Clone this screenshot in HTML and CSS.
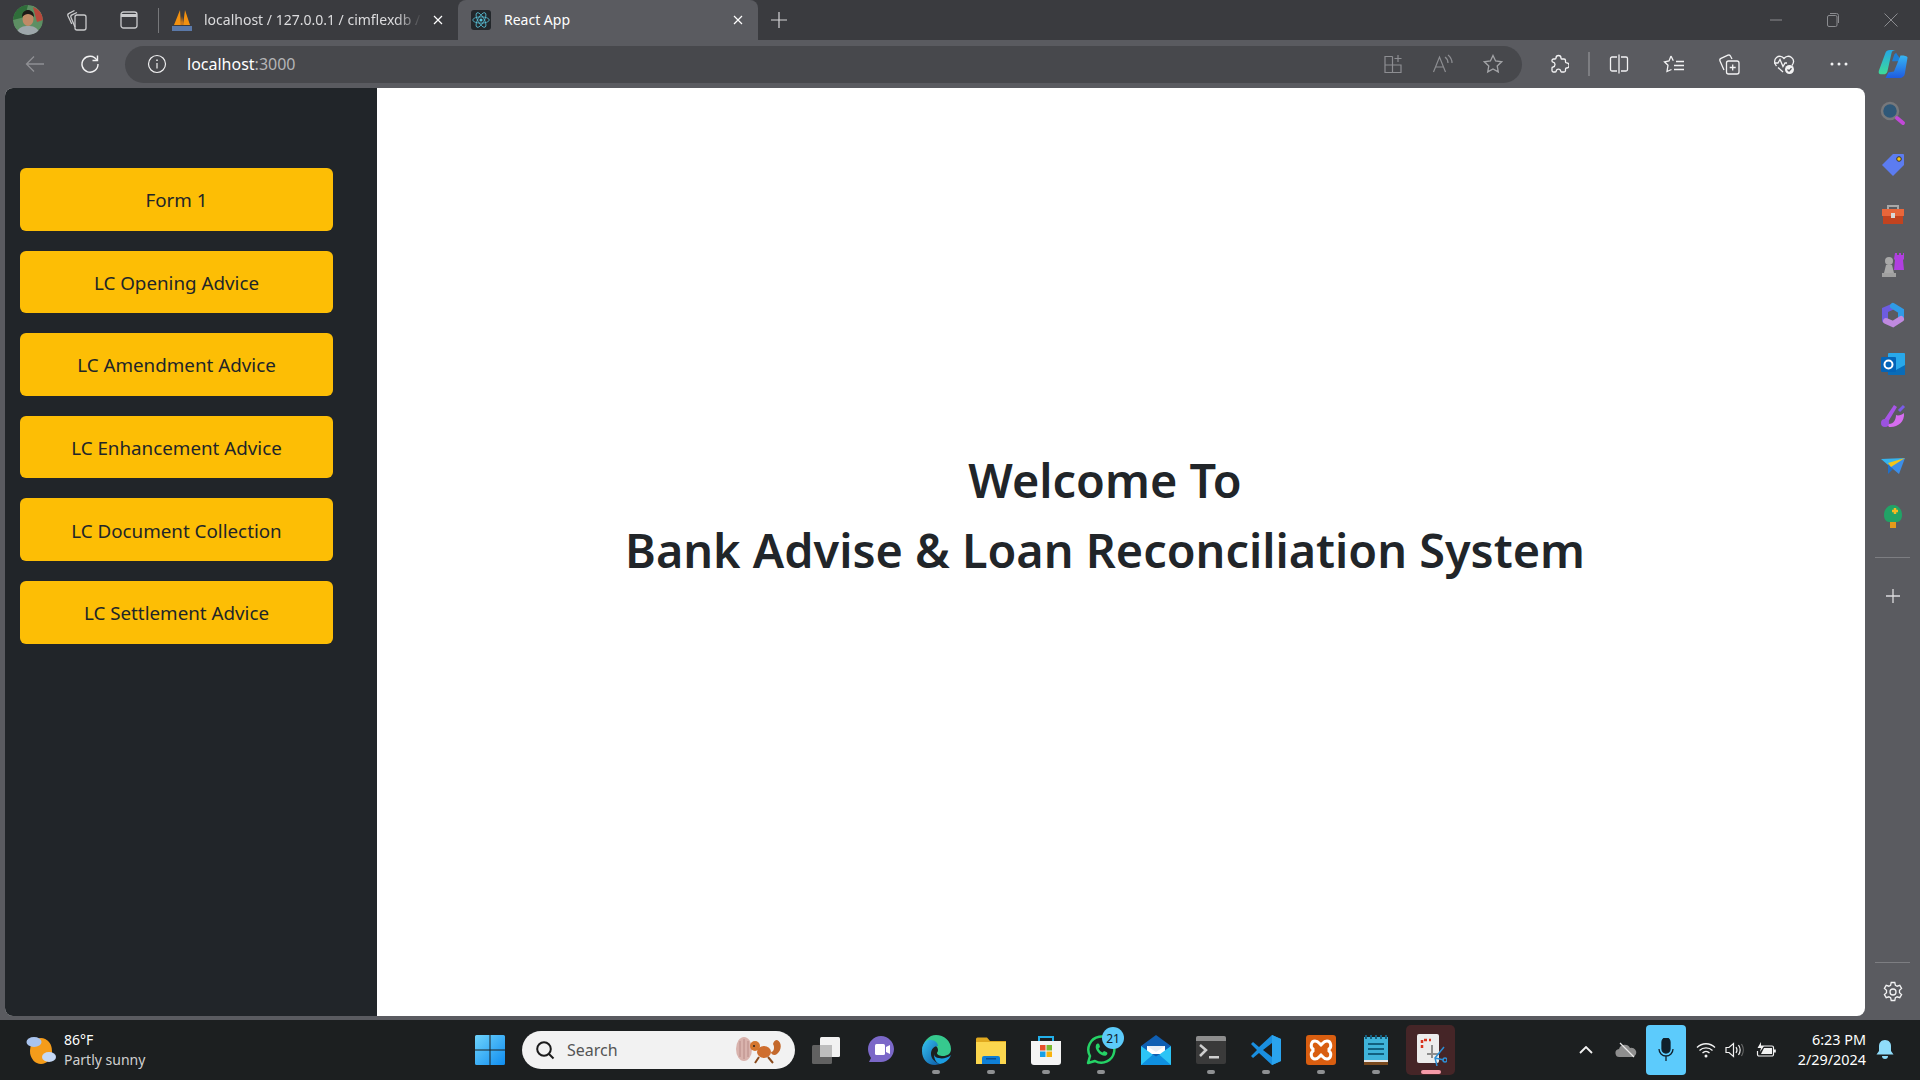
FILE: index.html
```html
<!DOCTYPE html>
<html lang="en">
<head>
    <meta charset="UTF-8">
    <meta name="viewport" content="width=device-width, initial-scale=1.0">
    <title>React App</title>
    <link rel="stylesheet" href="styles.css">
</head>
<body>
    <div class="tabbar">
        <div class="avatar">
            <svg width="30" height="30" viewBox="0 0 30 30">
                <circle cx="15" cy="15" r="15" fill="#5d8f63"/>
                <path d="M0 15A15 15 0 0 1 15 0L12 12Z" fill="#2f6d3a"/>
                <path d="M20 2a15 15 0 0 1 10 13l-6 2z" fill="#b8483c"/>
                <path d="M4 30h22v-3c-2-5-6-6-11-6s-9 1-11 6z" fill="#9ea7ab"/>
                <ellipse cx="15" cy="14" rx="5.5" ry="7" fill="#c08a66"/>
                <path d="M9 12c0-5 3-7 6-7s6 2 6 7c-2-2-4-3-6-3s-4 1-6 3z" fill="#1d1a18"/>
            </svg>
        </div>
        <svg class="tb-collections" width="22" height="22" viewBox="0 0 22 22" fill="none" stroke="#c9cacc" stroke-width="1.3">
            <rect x="9" y="6" width="11" height="15" rx="2"/>
            <path d="M9 18 5 8.5a2 2 0 0 1 1-2.6L11 3.5"/>
            <path d="M5.8 15 2 7a2 2 0 0 1 1-2.600L8.500 1.500"/>
        </svg>
        <svg class="tb-tabs" width="18" height="18" viewBox="0 0 18 18" fill="none" stroke="#c9cacc" stroke-width="1.3">
            <rect x="1" y="1" width="16" height="16" rx="2.500"/>
            <path d="M1 4.500h16" stroke-width="3"/>
        </svg>
        <span class="tb-sep"></span>
        <div class="tab">
            <svg class="favicon" width="20" height="24" viewBox="0 0 20 24">
                <path d="M2 17 8 2l1 15z" fill="#f29111"/>
                <path d="M11 17 13 2l5 15z" fill="#f29111"/>
                <path d="M8.500 17 10 8l1.500 9z" fill="#c9761a"/>
                <rect x="0" y="18" width="20" height="5" fill="#5a78a8"/>
            </svg>
            <span class="tab-title tab-fade">localhost / 127.0.0.1 / cimflexdb /</span>
            <svg class="tab-x" width="10" height="10" viewBox="0 0 10 10" stroke="#fff" stroke-width="1.200"><path d="M1 1l8 8M9 1 1 9"/></svg>
        </div>
        <div class="tab tab-active">
            <span class="react-box">
                <svg width="18" height="18" viewBox="-12 -12 24 24" fill="none" stroke="#58c4dc" stroke-width="1">
                    <circle r="2.100" fill="#58c4dc" stroke="none"/>
                    <ellipse rx="11" ry="4.200"/>
                    <ellipse rx="11" ry="4.200" transform="rotate(60)"/>
                    <ellipse rx="11" ry="4.200" transform="rotate(120)"/>
                </svg>
            </span>
            <span class="tab-title">React App</span>
            <svg class="tab-x" width="10" height="10" viewBox="0 0 10 10" stroke="#fff" stroke-width="1.200"><path d="M1 1l8 8M9 1 1 9"/></svg>
        </div>
        <svg class="tb-plus" width="16" height="16" viewBox="0 0 16 16" stroke="#d5d5d7" stroke-width="1.200"><path d="M8 0v16M0 8h16"/></svg>
        <div class="win-controls">
            <svg width="12" height="12" viewBox="0 0 12 12" stroke="#8b8c90"><path d="M0 6h12"/></svg>
            <svg width="12" height="14" viewBox="0 0 12 14" fill="none" stroke="#8b8c90"><rect x=".5" y="2.500" width="9.500" height="11" rx="1.500"/><path d="M3 .5h6.500a2 2 0 0 1 2 2V10"/></svg>
            <svg width="14" height="14" viewBox="0 0 14 14" stroke="#8b8c90"><path d="M.5.5l13 13M13.500.5l-13 13"/></svg>
        </div>
    </div>

    <div class="toolbar">
        <svg class="nav-back" width="20" height="18" viewBox="0 0 20 18" fill="none" stroke="#8f9094" stroke-width="1.300"><path d="M19 9H2M9 1.500 1.500 9 9 16.500"/></svg>
        <svg class="nav-reload" width="20" height="20" viewBox="0 0 20 20" fill="none" stroke="#f2f2f3" stroke-width="1.400"><path d="M16.800 6A8 8 0 1 0 18 10"/><path d="M17.500 1.500V6.500H12.500"/></svg>
        <div class="urlbar">
            <svg class="url-info" width="20" height="20" viewBox="0 0 20 20" fill="none" stroke="#f0f0f1" stroke-width="1.200"><circle cx="10" cy="10" r="8.500"/><path d="M10 9v5.500"/><path d="M10 5.500v1.500" stroke-width="1.500"/></svg>
            <span class="url-text">localhost<span class="url-port">:3000</span></span>
            <div class="url-icons">
                <svg width="20" height="20" viewBox="0 0 20 20" fill="none" stroke="#8d8e92" stroke-width="1.200"><path d="M9.500 2.500H2v16h16V11H2M9.500 2.500v16"/><path d="M15 1v7M11.500 4.500h7"/></svg>
                <svg width="22" height="20" viewBox="0 0 22 20" fill="none" stroke="#8d8e92" stroke-width="1.200"><path d="M1.500 18 7.500 3l6 15M3.500 13h8"/><path d="M13 3c2 1.500 3 3.500 3 6M16 1c2.500 2 4 5 4 8"/></svg>
                <svg width="20" height="20" viewBox="0 0 20 20" fill="none" stroke="#a3a4a7" stroke-width="1.300"><path d="m10 1.500 2.600 5.500 6 .8-4.400 4.100 1.100 6L10 15l-5.300 2.900 1.100-6L1.400 7.800l6-.8z"/></svg>
            </div>
        </div>
        <div class="tools">
            <span class="tool-slot"><svg width="20" height="20" viewBox="0 0 20 20" fill="none" stroke="#f2f2f3" stroke-width="1.300"><path d="M7 4a2.500 2.500 0 0 1 5 0c0 .5 0 1 .5 1H15a1.500 1.500 0 0 1 1.500 1.500V8c0 .7.5.8 1 .8a2.600 2.600 0 0 1 0 5.200c-.5 0-1 .3-1 1v1.500A1.500 1.500 0 0 1 15 18h-2.500c-.5 0-.7-.4-.8-1a2.300 2.300 0 0 0-4.500 0c0 .6-.4 1-1 1H4.500A1.500 1.500 0 0 1 3 16.500V14c0-.6.400-.9 1-1a2.500 2.500 0 0 0 0-4.900c-.6 0-1-.4-1-1V6.500A1.500 1.500 0 0 1 4.500 5H6c.6 0 1-.4 1-1z"/></svg></span>
            <span class="tool-sep"></span>
            <span class="tool-slot"><svg width="20" height="20" viewBox="0 0 20 20" fill="none" stroke="#f2f2f3" stroke-width="1.300"><path d="M8 3H3a1.500 1.500 0 0 0-1.500 1.500v11A1.500 1.500 0 0 0 3 17h5M12 3h5a1.500 1.500 0 0 1 1.500 1.500v11A1.500 1.500 0 0 1 17 17h-5M10 .5v19"/></svg></span>
            <span class="tool-slot"><svg width="22" height="20" viewBox="0 0 22 20" fill="none" stroke="#f2f2f3" stroke-width="1.300"><path d="M8 2 6 7 1.500 7.800 5 11.300 4 17.500 8.500 15.500M8 2l2.300 4.800"/><path d="M13 7.500h8M11 11.500h10M11 15.500h10"/></svg></span>
            <span class="tool-slot"><svg width="22" height="22" viewBox="0 0 22 22" fill="none" stroke="#f2f2f3" stroke-width="1.300"><rect x="8.500" y="8" width="12.500" height="13" rx="2"/><path d="M14.700 11.500v6M11.700 14.500h6"/><path d="M6 17 2 8a2 2 0 0 1 1-2.600L10 2.200a2 2 0 0 1 2.600 1L14 6"/></svg></span>
            <span class="tool-slot"><svg width="22" height="22" viewBox="0 0 22 22" fill="none" stroke="#f2f2f3" stroke-width="1.300"><path d="M3.500 13C1 10 1 6.500 3.500 4.500s5.500-1.500 7.500 1c2-2.500 5-3 7.500-1s2.500 5.200.5 8"/><path d="M1 10h4l2-3.500 3 7 2-3.500h2"/><path d="M5 14.500 10 19"/><circle cx="16.500" cy="16.500" r="4.500" fill="#f2f2f3" stroke="none"/><path d="m14.500 16.500 1.500 1.500 2.500-2.800" stroke="#55565b"/></svg></span>
            <span class="tool-slot"><svg width="18" height="4" viewBox="0 0 18 4" fill="#f2f2f3"><circle cx="2" cy="2" r="1.500"/><circle cx="9" cy="2" r="1.500"/><circle cx="16" cy="2" r="1.500"/></svg></span>
        </div>
        <svg class="copilot" width="30" height="30" viewBox="0 0 32 32">
            <defs>
                <linearGradient id="copA" x1="0" y1="0" x2="0" y2="1"><stop offset="0" stop-color="#25a7e6"/><stop offset="1" stop-color="#3ddc97"/></linearGradient>
                <linearGradient id="copB" x1="0" y1="0" x2="0" y2="1"><stop offset="0" stop-color="#36b6f2"/><stop offset="1" stop-color="#1f5be0"/></linearGradient>
            </defs>
            <path d="M8 4c1-2 2-3 5-3h6c-2 0-4 1-4.500 3L10 24c-.5 2-2 3-4 3H3c-2 0-2.800-1.600-2-4z" fill="url(#copA)"/>
            <path d="M15 13l2-6c.5-2 2-3 3-3-2 0 5 6 4 9z" fill="#1d7fd6"/>
            <path d="M24 7c1-.5 7 0 7.500 2l-3 18c-.5 2-2.500 4-5 4H8l3-6 6-1z" fill="url(#copB)"/>
        </svg>
    </div>

    <div class="window">
        <div class="viewport">
            <aside class="sidebar">
                <button class="side-btn">Form 1</button>
                <button class="side-btn">LC Opening Advice</button>
                <button class="side-btn">LC Amendment Advice</button>
                <button class="side-btn">LC Enhancement Advice</button>
                <button class="side-btn">LC Document Collection</button>
                <button class="side-btn">LC Settlement Advice</button>
            </aside>
            <main class="welcome">
                <h1>Welcome To<br>Bank Advise &amp; Loan Reconciliation System</h1>
            </main>
        </div>
        <div class="edge-rail">
            <svg class="rail-icon" width="26" height="26" viewBox="0 0 26 26"><circle cx="10" cy="10" r="8" fill="#2f5878" stroke="#77787b" stroke-width="2.500"/><path d="m17 17 6 5" stroke="#c248d8" stroke-width="4" stroke-linecap="round"/></svg>
            <svg class="rail-icon" width="26" height="26" viewBox="0 0 26 26"><path d="M13 3h10a1 1 0 0 1 1 1v10L13 25 2 14z" fill="#5c7cf0"/><circle cx="19" cy="8" r="2.300" fill="#f5c518" stroke="#333"/></svg>
            <svg class="rail-icon" width="26" height="26" viewBox="0 0 26 26"><path d="M8 8V4h10v4" fill="none" stroke="#a8a8a8" stroke-width="2"/><rect x="2" y="7" width="22" height="7" fill="#e8663a"/><rect x="3" y="14" width="20" height="8" fill="#c2431f"/><rect x="11" y="11" width="4" height="5" fill="#d8d8d8"/></svg>
            <svg class="rail-icon" width="26" height="26" viewBox="0 0 26 26"><path d="M15 1h2v2h2V1h2v2h2V1h1v6l-1 1 1 10h-10l1-10-1-1z" fill="#b03fe0"/><circle cx="9" cy="9" r="4" fill="#a8a8a8"/><path d="M6 13h6l2 8H4z" fill="#a8a8a8"/><rect x="2" y="21" width="14" height="4" fill="#a0a0a0"/></svg>
            <svg class="rail-icon" width="26" height="26" viewBox="0 0 26 26" fill="none" stroke-width="6" stroke-linecap="round"><path d="M5 18V8l7-3" stroke="#6d5ce0"/><path d="M13 4l8 5v6" stroke="#2f9be6"/><path d="M21 17l-8 5-7-3" stroke="#c08ae0"/></svg>
            <svg class="rail-icon" width="26" height="26" viewBox="0 0 26 26"><rect x="8" y="1" width="17" height="22" rx="1" fill="#28a8ea"/><path d="M8 13l8 5 9-5v10H8z" fill="#0a6cb8"/><rect x="1" y="5" width="15" height="15" rx="1" fill="#0364b8"/><circle cx="8.500" cy="12.500" r="4" fill="none" stroke="#fff" stroke-width="2"/></svg>
            <svg class="rail-icon" width="26" height="26" viewBox="0 0 26 26"><path d="M4 17 14 2l3 2-9 15z" fill="#a855e8"/><path d="M24 10c1 9-7 15-15 14l-2-3c7 1 9-5 9-9 2 1 6 0 8-2z" fill="#d66df0"/><circle cx="5" cy="20" r="4" fill="#9b52e0"/><path d="m19 8 5-5" stroke="#7a5ce8" stroke-width="3"/></svg>
            <svg class="rail-icon" width="26" height="26" viewBox="0 0 26 26"><path d="M1 6l24-1L8 12z" fill="#35b4ee"/><path d="M8 12 25 5 19 21l-6-5z" fill="#3c8ee8"/><path d="M8 10 25 5 11 14z" fill="#f5c518"/><path d="M8 12l5 4-5 5z" fill="#1f6fc8"/></svg>
            <svg class="rail-icon" width="26" height="26" viewBox="0 0 26 26"><rect x="10" y="18" width="6" height="7" fill="#e59a1a"/><path d="M13 2c5 0 9 4 9 10 0 4-2 7-5 7H9c-3 0-5-3-5-7C4 6 8 2 13 2z" fill="#21a366"/><path d="M15 5v6M12 8h6" stroke="#f5b921" stroke-width="2.500"/></svg>
            <span class="rail-sep"></span>
            <svg class="rail-plus" width="16" height="16" viewBox="0 0 16 16" stroke="#dcdcde" stroke-width="1.300"><path d="M8 1v14M1 8h14"/></svg>
            <span class="rail-sep rail-sep-bottom"></span>
            <svg class="rail-gear" width="22" height="22" viewBox="0 0 22 22" fill="none" stroke="#f2f2f3" stroke-width="1.300"><circle cx="11" cy="11" r="3"/><path d="M9.200 1.500h3.600l.6 2.800 1.700.9 2.700-.9 1.800 3.100-2.100 1.900v2.400l2.100 1.900-1.800 3.100-2.700-.9-1.700.9-.6 2.800H9.200l-.6-2.800-1.700-.9-2.700.9-1.800-3.100 2.100-1.900V9.300L2.400 7.400l1.800-3.100 2.700.9 1.700-.9z"/></svg>
        </div>
    </div>

    <footer class="taskbar">
        <div class="weather">
            <svg width="30" height="30" viewBox="0 0 30 30">
                <ellipse cx="15" cy="16" rx="11" ry="13" fill="#f59c1a"/>
                <ellipse cx="8" cy="7" rx="7.500" ry="5" fill="#a9c4ee"/>
                <ellipse cx="23" cy="22" rx="7" ry="5" fill="#c5d8f5"/>
            </svg>
            <div class="weather-text">
                <span class="temp">86°F</span>
                <span class="cond">Partly sunny</span>
            </div>
        </div>
        <svg class="winlogo" width="30" height="30" viewBox="0 0 30 30">
            <defs><linearGradient id="winG" x1="0" y1="0" x2="1" y2="1"><stop offset="0" stop-color="#6fd3fb"/><stop offset="1" stop-color="#0f8df0"/></linearGradient></defs>
            <path d="M0 1.500A1.500 1.500 0 0 1 1.500 0h13v14.500H0zM15.500 0h13A1.500 1.500 0 0 1 30 1.500v13H15.500zM0 15.500h14.500V30h-13A1.500 1.500 0 0 1 0 28.500zM15.500 15.500H30v13a1.500 1.500 0 0 1-1.500 1.500h-13z" fill="url(#winG)"/>
        </svg>
        <div class="searchbox">
            <svg width="20" height="20" viewBox="0 0 20 20" fill="none" stroke="#1b1b1b" stroke-width="2"><circle cx="9" cy="9" r="6.800"/><path d="m14 14 4.500 4.500"/></svg>
            <span class="search-text">Search</span>
            <svg class="search-art" width="48" height="30" viewBox="0 0 48 30">
                <ellipse cx="9" cy="14" rx="8" ry="12" fill="#d9b3ad"/>
                <path d="M5 6v16M9 4v20M13 6v16" stroke="#b98c88"/>
                <path d="M42 5c5 2 5 10 0 14-2 2-6 1-6-2 3 0 4-5 2-8 1-3 2-4 4-4z" fill="#c4692c"/>
                <ellipse cx="29" cy="17" rx="7" ry="6" fill="#cf6e2e"/>
                <circle cx="20" cy="11" r="5" fill="#d4762f"/>
                <circle cx="19" cy="11" r="1" fill="#222"/>
                <path d="M24 22 20 28M33 22l5 6" stroke="#8a4a1c" stroke-width="2"/>
            </svg>
        </div>
        <div class="task-apps">
            <span class="app">
                <svg width="30" height="30" viewBox="0 0 30 30"><rect x="9" y="2" width="20" height="20" rx="1.500" fill="#f2f2f2"/><rect x="1" y="10" width="20" height="19" rx="1.500" fill="#6d6d6d" fill-opacity=".85"/><rect x="9" y="10" width="12" height="12" fill="#bdbdbd"/></svg>
            </span>
            <span class="app">
                <svg width="30" height="30" viewBox="0 0 30 30"><path d="M15 1c7 0 13 6 13 13s-6 13-13 13H3l2-4C3 20 2 17 2 14 2 7 8 1 15 1z" fill="#7b68c8"/><rect x="9" y="9" width="10" height="11" rx="1.500" fill="#fff"/><path d="m20 12 4-2v9l-4-2z" fill="#fff"/></svg>
            </span>
            <span class="app app-open">
                <svg width="30" height="30" viewBox="0 0 30 30"><defs><linearGradient id="edgeG" x1="0" y1="0" x2="1" y2="1"><stop offset="0" stop-color="#35c1f1"/><stop offset="1" stop-color="#0c59a4"/></linearGradient></defs><path d="M15 0c8 0 15 6 15 14 0 5-4 7-8 7-3 0-6-1-6-3 0-1 1-1 1-3 0-3-3-6-7-6-5 0-9 4-9 7C2 6 8 0 15 0z" fill="#36c98e"/><path d="M1 16C1 8 6 4 10 5c4 0 7 3 7 6-4 0-7 3-7 8 0 4 3 8 9 10-1 0-3 1-5 1C6 30 1 24 1 16z" fill="url(#edgeG)"/><path d="M19 29c5-1 9-4 11-9-3 3-9 4-12 3-3 0-5-2-5-4 0 5 2 9 6 10z" fill="#1b9de2"/></svg>
            </span>
            <span class="app app-open">
                <svg width="30" height="30" viewBox="0 0 30 30"><path d="M0 4a1.500 1.500 0 0 1 1.500-1.500H11L14 6h16v23H0z" fill="#e0a91f"/><rect x="0" y="7" width="30" height="22" fill="#fbd64e"/><path d="M6 29v-6a2 2 0 0 1 2-2h14a2 2 0 0 1 2 2v6z" fill="#0f7fd6"/><rect x="10" y="23" width="10" height="1.500" fill="#0b4f94"/></svg>
            </span>
            <span class="app app-open">
                <svg width="30" height="30" viewBox="0 0 30 30"><path d="M8 6V2h14v4" fill="none" stroke="#22b0ea" stroke-width="2"/><path d="M0 6h30v21a3 3 0 0 1-3 3H3a3 3 0 0 1-3-3z" fill="#f4f4f4"/><rect x="9" y="10" width="5.500" height="5.500" fill="#e8502a"/><rect x="15.500" y="10" width="5.500" height="5.500" fill="#79b92f"/><rect x="9" y="16.500" width="5.500" height="5.500" fill="#18a0e8"/><rect x="15.500" y="16.500" width="5.500" height="5.500" fill="#f8b30f"/></svg>
            </span>
            <span class="app app-open">
                <svg width="30" height="30" viewBox="0 0 30 30" fill="none"><path d="M2 28l2-7a13 13 0 1 1 5 5z" stroke="#25d366" stroke-width="2.500" stroke-linejoin="round"/><path d="M10 10c1-2 3-2 3.500 0l.5 2-1.500 1.500c1 2 2 3 4 4L18 16l2.500 1c1.500.8 1 2.500-.5 3.500-4 1.500-12-5-10-10.500z" fill="#25d366"/></svg>
                <span class="badge">21</span>
            </span>
            <span class="app">
                <svg width="30" height="30" viewBox="0 0 30 30"><path d="M15 0 30 11v19H0V11z" fill="#0f5fb3"/><path d="M6 11h18v8H6z" fill="#fff"/><path d="M0 11l15 11 15-11v19H0z" fill="#2cc4f5"/><path d="M0 30 12 19.500 15 22l3-2.500L30 30z" fill="#0f90e0"/><path d="M6 11h18l-9 6z" fill="#e8eef5"/></svg>
            </span>
            <span class="app app-open">
                <svg width="30" height="30" viewBox="0 0 30 30"><rect x="0" y="1" width="30" height="28" rx="2" fill="#3a3a3a"/><path d="M0 3a2 2 0 0 1 2-2h26a2 2 0 0 1 2 2v3H0z" fill="#8d8d8d"/><path d="m4 10 6 5-6 6" fill="none" stroke="#cfcfcf" stroke-width="2.500"/><rect x="13" y="21" width="10" height="2.500" fill="#cfcfcf"/></svg>
            </span>
            <span class="app app-open">
                <svg width="30" height="30" viewBox="0 0 30 30"><path d="M21 0 30 4v22l-9 4-13-12-6 5-2-2 6-6-6-6 2-2 6 5z" fill="#1a8fe0"/><path d="M21 8v14l-9-7z" fill="#1c1e1f"/><path d="M21 0v30l9-4V4z" fill="#2aa3ee"/></svg>
            </span>
            <span class="app app-open">
                <svg width="30" height="30" viewBox="0 0 30 30"><rect width="30" height="30" rx="3" fill="#d95e10"/><path d="M9 6c-4 0-5 6-2 8v2c-3 2-2 8 2 8 3 0 4-2 6-4 2 2 3 4 6 4 4 0 5-6 2-8v-2c3-2 2-8-2-8-3 0-4 2-6 4-2-2-3-4-6-4z" fill="none" stroke="#fff" stroke-width="3"/></svg>
            </span>
            <span class="app app-open">
                <svg width="30" height="30" viewBox="0 0 30 30"><rect x="3" y="2" width="24" height="27" fill="#3fb3d9"/><rect x="3" y="25" width="24" height="2" fill="#e8e8e8"/><rect x="3" y="27" width="24" height="3" fill="#7a4a1e"/><path d="M5 0v4M10 0v4M15 0v4M20 0v4M25 0v4" stroke="#16607f" stroke-width="2"/><path d="M7 9h16M7 14h16M7 19h16" stroke="#12607f" stroke-width="2"/></svg>
            </span>
            <span class="app app-active">
                <svg width="32" height="32" viewBox="0 0 32 32"><rect x="2" y="0" width="22" height="29" rx="2" fill="#ececec"/><path d="M7 14V6h9" fill="none" stroke="#d8341f" stroke-width="2.500" stroke-dasharray="3 2"/><path d="M17 11v13M12 20h12" stroke="#8d8d8d" stroke-width="2"/><path d="m29 13-9 11 2 8M20 24l9 2" fill="none" stroke="#2d8fd5" stroke-width="1.500"/><circle cx="30" cy="26" r="2" fill="none" stroke="#2d8fd5" stroke-width="1.500"/></svg>
            </span>
        </div>
        <div class="tray">
            <svg class="tray-chevron" width="14" height="8" viewBox="0 0 14 8" fill="none" stroke="#f2f2f2" stroke-width="1.800"><path d="m1 7 6-6 6 6"/></svg>
            <svg class="tray-cloud" width="22" height="16" viewBox="0 0 22 16"><path d="M5 15a4 4 0 0 1-1-8 6 6 0 0 1 11-1 4.500 4.500 0 0 1 3 9z" fill="#8e8e8e"/><path d="m5 1 14 14" stroke="#e8e8e8" stroke-width="1.200"/></svg>
            <span class="mic-tile">
                <svg width="16" height="24" viewBox="0 0 16 24" fill="none" stroke="#10202c" stroke-width="1.300"><rect x="4" y="0" width="8" height="15" rx="4" fill="#10202c"/><path d="M1 11a7 7 0 0 0 14 0M8 18v5"/></svg>
            </span>
            <svg class="tray-wifi" width="20" height="16" viewBox="0 0 20 16" fill="none" stroke="#f2f2f2" stroke-width="1.300"><path d="M1 5.500c5-5 13-5 18 0M3.500 8.500c3.500-3.500 9.500-3.500 13 0M6.500 11c2-2 5-2 7 0"/><circle cx="10" cy="14" r="1.500" fill="#f2f2f2" stroke="none"/></svg>
            <svg class="tray-vol" width="20" height="16" viewBox="0 0 20 16" fill="none" stroke="#f2f2f2" stroke-width="1.200"><path d="M1 5.500h3L8.500 1.500v13L4 10.500H1z"/><path d="M11 5c1.200 1.800 1.200 4.200 0 6M13.500 3c2 3 2 7 0 10"/><path d="M16.500 2c2.300 3.500 2.300 8.500 0 12" stroke="#6a6a6a"/></svg>
            <svg class="tray-batt" width="20" height="16" viewBox="0 0 20 16" fill="none" stroke="#f2f2f2" stroke-width="1.200"><path d="M5 4h11a1.500 1.500 0 0 1 1.500 1.500v7A1.500 1.500 0 0 1 16 14H3a1.500 1.500 0 0 1-1.500-1.500V9"/><path d="M18.800 7.500v3" stroke-width="2"/><path d="M5 0 1.500 6H5l-1 4 4-6H5z" fill="#f2f2f2" stroke="none"/><path d="M8 6h8v6H5z" fill="#f2f2f2" stroke="none"/></svg>
            <div class="clock">
                <span>6:23 PM</span>
                <span>2/29/2024</span>
            </div>
            <svg class="tray-bell" width="18" height="20" viewBox="0 0 18 20"><path d="M9 0c4 0 6 3 6 6v5l2.500 3.500h-17L3 11V6c0-3 2-6 6-6z" fill="#8fdcfa"/><path d="M6 16h6a3 3 0 0 1-6 0z" fill="#8fdcfa"/></svg>
        </div>
    </footer>
</body>
</html>
```

FILE: styles.css
```css
* {
    box-sizing: border-box;
}
html, body {
    margin: 0;
    padding: 0;
}
body {
    width: 1920px;
    height: 1080px;
    overflow: hidden;
    display: flex;
    flex-direction: column;
    font-family: "Noto Sans", "Open Sans", sans-serif;
    background-color: #5a5b60;
}
svg {
    display: block;
    flex-shrink: 0;
}

/* tab strip */
.tabbar {
    height: 40px;
    display: flex;
    align-items: center;
    background-color: #3a3b3f;
    color: #dcdcde;
    font-size: 14px;
}
.avatar {
    margin-left: 13px;
    width: 30px;
    height: 30px;
    border-radius: 50%;
    overflow: hidden;
}
.tb-collections {
    margin-left: 23px;
}
.tb-tabs {
    margin-left: 32px;
}
.tb-sep {
    width: 1px;
    height: 25px;
    margin-left: 20px;
    background-color: #77787b;
}
.tab {
    width: 285px;
    height: 40px;
    display: flex;
    align-items: center;
    padding-left: 13px;
}
.tab-title {
    margin-left: 12px;
    margin-top: -2px;
    width: 218px;
    white-space: nowrap;
    overflow: hidden;
}
.tab-fade {
    -webkit-mask-image: linear-gradient(to right, #000 88%, transparent);
    mask-image: linear-gradient(to right, #000 88%, transparent);
}
.tab-x {
    margin-left: 11px;
}
.tab-active {
    width: 300px;
    margin-left: 14px;
    border-radius: 8px 8px 0 0;
    background-color: #5a5b60;
    color: #fff;
}
.tab-active .tab-title {
    width: 221px;
    margin-left: 13px;
}
.tab-active .tab-x {
    margin-left: 8px;
}
.react-box {
    width: 20px;
    height: 20px;
    display: flex;
    align-items: center;
    justify-content: center;
    background-color: #23272b;
    border-radius: 3px;
}
.tb-plus {
    margin-left: 13px;
}
.win-controls {
    margin-left: auto;
    display: flex;
    align-items: center;
    gap: 45px;
    padding-right: 22px;
}

/* address bar row */
.toolbar {
    height: 48px;
    display: flex;
    align-items: center;
    background-color: #5a5b60;
}
.nav-back {
    margin-left: 25px;
}
.nav-reload {
    margin-left: 35px;
}
.urlbar {
    width: 1397px;
    height: 37px;
    margin-left: 25px;
    padding: 0 19px 0 22px;
    display: flex;
    align-items: center;
    border-radius: 19px;
    background-color: #47484c;
}
.url-text {
    margin-left: 20px;
    font-size: 16px;
    color: #fff;
}
.url-port {
    color: #b4b4b6;
}
.url-icons {
    margin-left: auto;
    display: flex;
    align-items: center;
    gap: 29px;
}
.tools {
    display: flex;
    align-items: center;
    margin-left: 9px;
}
.tool-slot {
    width: 55px;
    display: flex;
    justify-content: center;
}
.tool-sep {
    width: 2px;
    height: 24px;
    margin: 0 1px 0 2px;
    background-color: #7d7e82;
}
.copilot {
    margin-left: 12px;
}

/* page + edge rail */
.window {
    flex: 1;
    min-height: 0;
    display: flex;
}
.viewport {
    flex: 1;
    margin: 0 0 4px 5px;
    display: flex;
    overflow: hidden;
    border-radius: 8px;
    background-color: #ffffff;
}
.sidebar {
    width: 372px;
    padding: 80px 44px 0 15px;
    display: flex;
    flex-direction: column;
    gap: 20px;
    background-color: #212529;
}
.side-btn {
    height: 62.600px;
    border: none;
    border-radius: 6px;
    background-color: #fdbe05;
    color: #212529;
    font-family: inherit;
    font-size: 18.800px;
    padding: 2px 0 0;
}
.welcome {
    flex: 1;
    display: flex;
    align-items: center;
    justify-content: center;
    padding-right: 32px;
    padding-bottom: 74px;
}
.welcome h1 {
    margin: 0;
    font-size: 46.800px;
    font-weight: 600;
    line-height: 70px;
    text-align: center;
    color: #212529;
}
.edge-rail {
    width: 55px;
    display: flex;
    flex-direction: column;
    align-items: center;
    padding-top: 13px;
    padding-bottom: 17px;
}
.rail-icon {
    margin-bottom: 24.300px;
}
.rail-sep {
    width: 35px;
    height: 1px;
    margin-top: 3px;
    background-color: #7d7e82;
}
.rail-plus {
    margin-top: 30px;
}
.rail-sep-bottom {
    margin-top: auto;
}
.rail-gear {
    margin-top: 18px;
}

/* windows taskbar */
.taskbar {
    height: 60px;
    display: flex;
    align-items: center;
    background-color: #1c1f20;
    color: #fff;
}
.weather {
    width: 475px;
    display: flex;
    align-items: center;
    padding-left: 26px;
}
.weather-text {
    margin-left: 8px;
    display: flex;
    flex-direction: column;
    font-size: 14px;
    line-height: 20px;
}
.cond {
    color: #d0d0d0;
}
.searchbox {
    width: 273px;
    height: 38px;
    margin-left: 17px;
    padding: 0 12px 0 13px;
    display: flex;
    align-items: center;
    border-radius: 19px;
    background-color: #f2f2f2;
    color: #555;
}
.search-text {
    margin-left: 12px;
    font-size: 16px;
}
.search-art {
    margin-left: auto;
}
.task-apps {
    display: flex;
    align-items: center;
    margin-left: 3px;
}
.app {
    width: 55px;
    height: 50px;
    display: flex;
    align-items: center;
    justify-content: center;
    position: relative;
}
.app-open::after,
.app-active::after {
    content: "";
    position: absolute;
    left: 50%;
    bottom: 1px;
    width: 8px;
    height: 4px;
    margin-left: -4px;
    border-radius: 2px;
    background-color: #8e9092;
}
.app-active {
    width: 49px;
    margin-left: 3px;
    border-radius: 5px;
    background-color: #452527;
}
.app-active::after {
    width: 20px;
    margin-left: -10px;
    background-color: #f59aa8;
}
.badge {
    position: absolute;
    top: 2px;
    right: 4px;
    width: 22px;
    height: 22px;
    display: flex;
    align-items: center;
    justify-content: center;
    border-radius: 50%;
    background-color: #5ccbfa;
    color: #10202c;
    font-size: 12px;
}
.tray {
    flex: 1;
    display: flex;
    align-items: center;
}
.tray-chevron {
    margin-left: 124px;
}
.tray-cloud {
    margin-left: 22px;
}
.mic-tile {
    width: 40px;
    height: 50px;
    margin-left: 9px;
    display: flex;
    align-items: center;
    justify-content: center;
    border-radius: 4px;
    background-color: #5ccbfc;
}
.tray-wifi {
    margin-left: 10px;
}
.tray-vol {
    margin-left: 9px;
}
.tray-batt {
    margin-left: 11px;
}
.clock {
    margin-left: 0;
    width: 90px;
    display: flex;
    flex-direction: column;
    align-items: flex-end;
    font-size: 14.400px;
    line-height: 20px;
}
.tray-bell {
    margin-left: 10px;
}
```
